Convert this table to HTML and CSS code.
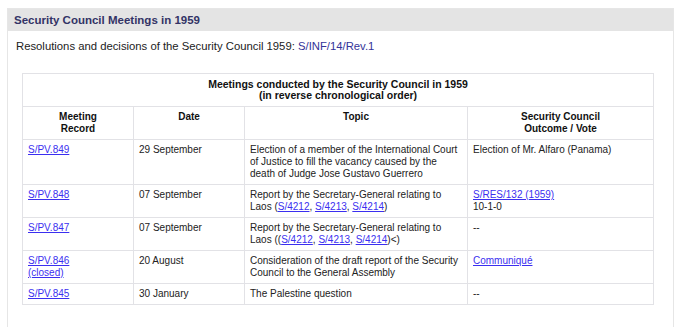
FILE: index.html
```html
<!DOCTYPE html>
<html>
<head>
<meta charset="utf-8">
<link rel="stylesheet" href="styles.css">
</head>
<body>
<div class="panel">
  <div class="panel-head">Security Council Meetings in 1959</div>
  <div class="panel-body">
    <p class="intro">Resolutions and decisions of the Security Council 1959: <a class="doc" href="#">S/INF/14/Rev.1</a></p>
    <table class="meetings">
      <colgroup>
        <col class="c1"><col class="c2"><col class="c3"><col class="c4">
      </colgroup>
      <thead>
        <tr><th colspan="4" class="cap">Meetings conducted by the Security Council in 1959<br>(in reverse chronological order)</th></tr>
        <tr><th>Meeting<br>Record</th><th>Date</th><th>Topic</th><th>Security Council<br>Outcome / Vote</th></tr>
      </thead>
      <tbody>
        <tr><td><a href="#">S/PV.849</a></td><td>29 September</td><td>Election of a member of the International Court of Justice to fill the vacancy caused by the death of Judge Jose Gustavo Guerrero</td><td>Election of Mr. Alfaro (Panama)</td></tr>
        <tr><td><a href="#">S/PV.848</a></td><td>07 September</td><td>Report by the Secretary-General relating to Laos (<a href="#">S/4212</a>, <a href="#">S/4213</a>, <a href="#">S/4214</a>)</td><td><a href="#">S/RES/132 (1959)</a><br>10-1-0</td></tr>
        <tr><td><a href="#">S/PV.847</a></td><td>07 September</td><td>Report by the Secretary-General relating to Laos ((<a href="#">S/4212</a>, <a href="#">S/4213</a>, <a href="#">S/4214</a>)&lt;)</td><td>--</td></tr>
        <tr><td><a href="#">S/PV.846<br>(closed)</a></td><td>20 August</td><td>Consideration of the draft report of the Security Council to the General Assembly</td><td><a href="#">Communiqué</a></td></tr>
        <tr><td><a href="#">S/PV.845</a></td><td>30 January</td><td>The Palestine question</td><td>--</td></tr>
      </tbody>
    </table>
  </div>
</div>
</body>
</html>
```

FILE: styles.css
```css
html, body {
  margin: 0;
  padding: 0;
  background: #fff;
}
body {
  padding: 8px 6px 0 7px;
  font-family: "Liberation Sans", Arial, Helvetica, sans-serif;
  color: #222;
}
.panel {
  border: 1px solid #e6e6e6;
  border-bottom: none;
  height: 330px;
  box-sizing: border-box;
}
.panel-head {
  background: #e4e4e4;
  color: #333366;
  font-weight: bold;
  font-size: 11.5px;
  line-height: 22px;
  padding: 0 6px;
}
.panel-body {
  padding: 0 20px 0 8px;
}
.intro {
  margin: 0;
  padding: 8px 0 0 0;
  font-size: 11.3px;
  line-height: 14px;
  height: 34px;
  box-sizing: content-box;
}
.intro .doc {
  color: #333399;
  text-decoration: none;
}
.meetings {
  border-collapse: collapse;
  table-layout: fixed;
  width: 631px;
  margin-left: 6px;
  font-size: 10px;
  line-height: 12px;
  border: 1px solid #d4d4d8;
}
.c1 { width: 111px; }
.c2 { width: 111px; }
.c3 { width: 223px; }
.c4 { width: 186px; }
.meetings th,
.meetings td {
  border: 1px solid #e2e2e6;
  padding: 4px 5px 4px 5px;
  vertical-align: top;
  text-align: left;
}
.meetings th {
  text-align: center;
  font-weight: bold;
  color: #111;
}
.meetings th.cap {
  font-size: 10.5px;
  line-height: 11px;
  padding: 5px 5px 5px 5px;
}
.meetings a {
  color: #3b2ff0;
  text-decoration: underline;
}
```
